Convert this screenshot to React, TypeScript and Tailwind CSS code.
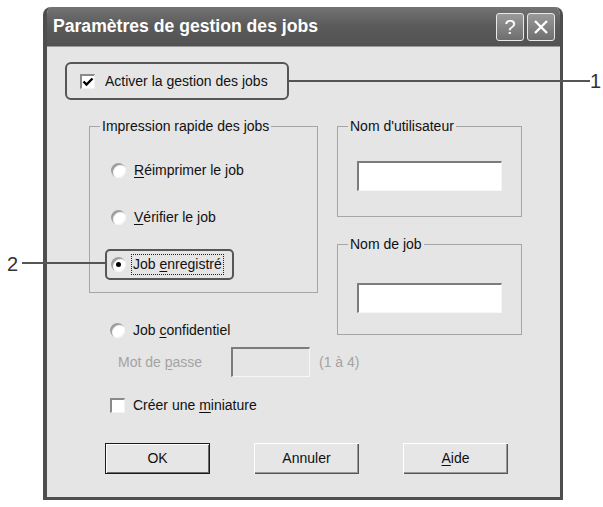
import type { ReactNode } from "react";

const Radio = ({ checked = false }: { checked?: boolean }) => (
  <span className="flex size-[15px] shrink-0 items-center justify-center rounded-full bg-white shadow-[inset_2px_2px_1px_#9c9c9c,inset_-1px_-1px_0_#f4f4f4]">
    {checked && <span className="size-[5px] rounded-full bg-black" />}
  </span>
);

const Check = ({ checked = false }: { checked?: boolean }) => (
  <span className="flex size-[15px] shrink-0 items-center justify-center border-t-2 border-l-2 border-[#8a8a8a] border-r border-b border-r-[#f2f2f2] border-b-[#f2f2f2] bg-white">
    {checked && (
      <svg viewBox="0 0 12 12" className="size-[12px]">
        <path d="M1.5 5.5 L4.5 8.5 L10.5 2.5" fill="none" stroke="#000" strokeWidth="2.4" />
      </svg>
    )}
  </span>
);

const Sunken = ({ className }: { className: string }) => (
  <div className={`border-t-2 border-l-2 border-[#7c7c7c] border-r border-b border-r-[#f6f6f6] border-b-[#f6f6f6] ${className}`} />
);

const U = ({ children }: { children: ReactNode }) => <span className="underline underline-offset-2">{children}</span>;

const Button = ({ children, primary = false }: { children: ReactNode; primary?: boolean }) => (
  <div
    className={`flex h-[31px] w-[105px] items-center justify-center bg-[#e6e6e6] text-[14px] text-[#111] ${
      primary
        ? "border border-[#1a1a1a] shadow-[inset_1px_1px_0_#fff,inset_-1px_-1px_0_#6a6a6a]"
        : "shadow-[inset_1px_1px_0_#fff,inset_-1px_-1px_0_#555,inset_-2px_-2px_0_#9a9a9a]"
    }`}
  >
    {children}
  </div>
);

export default function App() {
  return (
    <div className="relative h-[507px] w-[603px] overflow-hidden bg-white pt-[7px] pl-[43px] font-['Liberation_Sans',Arial,sans-serif] text-[#111]">
      <div className="flex h-[493px] w-[520px] flex-col overflow-hidden rounded-t-[8px] border-r-[3px] border-b-[3px] border-l-4 border-[#4e4e4e] bg-[#e5e5e5]">
        {/* title bar */}
        <div className="flex h-[40px] shrink-0 items-center justify-between border-b border-[#9a9a9a] bg-gradient-to-b from-[#737373] via-[#5a5a5a] to-[#525252] pr-[5px] pl-[6px]">
          <span className="text-[17.6px] font-bold text-white">Paramètres de gestion des jobs</span>
          <div className="mt-[1px] flex gap-[3px]">
            <div className="flex size-[28px] items-center justify-center rounded-[3px] border-[1.5px] border-[#e8e8e8] bg-gradient-to-b from-[#9a9a9a] to-[#6e6e6e] text-[20px] leading-none text-white">
              ?
            </div>
            <div className="flex size-[28px] items-center justify-center rounded-[3px] border-[1.5px] border-[#e8e8e8] bg-gradient-to-b from-[#9a9a9a] to-[#6e6e6e]">
              <svg viewBox="0 0 16 16" className="size-[16px]">
                <path d="M2 2 L14 14 M14 2 L2 14" stroke="#fff" strokeWidth="2.4" />
              </svg>
            </div>
          </div>
        </div>

        {/* body */}
        <div className="flex flex-col text-[14px]">
          <div className="mt-[15px] ml-[18px] flex h-[38px] w-[224px] items-center gap-[10px] rounded-[6px] border-2 border-[#565656] pl-[13px]">
            <Check checked />
            <span>
              Activer la <U>g</U>estion des jobs
            </span>
          </div>

          <div className="mt-[18px] ml-[42px] flex gap-[19px]">
            {/* left column */}
            <div className="flex w-[229px] flex-col">
              <fieldset className="h-[175px] border border-[#a6a6a6]">
                <legend className="ml-[10px] px-[2px] leading-[16px]">Impression rapide des jobs</legend>
                <div className="mt-[26px] ml-[21px] flex h-[20px] items-center gap-[8px]">
                  <Radio />
                  <span>
                    <U>R</U>éimprimer le job
                  </span>
                </div>
                <div className="mt-[27px] ml-[21px] flex h-[20px] items-center gap-[8px]">
                  <Radio />
                  <span>
                    <U>V</U>érifier le job
                  </span>
                </div>
                <div className="mt-[22px] ml-[15px] flex h-[31px] w-[129px] items-center gap-[5px] rounded-[5px] border-2 border-[#565656] pl-[4px]">
                  <Radio checked />
                  <span className="border border-dotted border-[#222] px-[1px] leading-[19px]">
                    Job <U>e</U>nregistré
                  </span>
                </div>
              </fieldset>

              <div className="mt-[27px] ml-[21px] flex h-[20px] items-center gap-[8px]">
                <Radio />
                <span>
                  Job <U>c</U>onfidentiel
                </span>
              </div>
              <div className="mt-[7px] ml-[29px] flex h-[30px] items-center whitespace-nowrap text-[#a3a3a3]">
                <span className="w-[113px] shrink-0">
                  Mot de <U>p</U>asse
                </span>
                <Sunken className="h-[30px] w-[79px] shrink-0 bg-[#e5e5e5]" />
                <span className="ml-[9px] shrink-0">(1 à 4)</span>
              </div>
              <div className="mt-[18px] ml-[21px] flex h-[20px] items-center gap-[8px]">
                <Check />
                <span>
                  Créer une <U>m</U>iniature
                </span>
              </div>
            </div>

            {/* right column */}
            <div className="flex w-[185px] flex-col gap-[19px]">
              <fieldset className="h-[99px] border border-[#a6a6a6]">
                <legend className="ml-[10px] px-[2px] leading-[16px]">Nom d'utilisateur</legend>
                <Sunken className="mt-[27px] ml-[19px] h-[30px] w-[145px] bg-white" />
              </fieldset>
              <fieldset className="h-[99px] border border-[#a6a6a6]">
                <legend className="ml-[10px] px-[2px] leading-[16px]">Nom de job</legend>
                <Sunken className="mt-[31px] ml-[19px] h-[30px] w-[145px] bg-white" />
              </fieldset>
            </div>
          </div>

          <div className="mt-[28px] ml-[58px] flex gap-[44px]">
            <Button primary>OK</Button>
            <Button>Annuler</Button>
            <Button>
              <U>A</U>ide
            </Button>
          </div>
        </div>
      </div>

      {/* callouts */}
      <div className="absolute top-[80px] left-[289px] h-[2px] w-[301px] bg-[#555]" />
      <span className="absolute top-[71px] left-[590px] text-[20px] leading-none text-[#333]">1</span>
      <div className="absolute top-[262px] left-[22px] h-[2px] w-[84px] bg-[#555]" />
      <span className="absolute top-[254px] left-[7px] text-[20px] leading-none text-[#333]">2</span>
    </div>
  );
}
